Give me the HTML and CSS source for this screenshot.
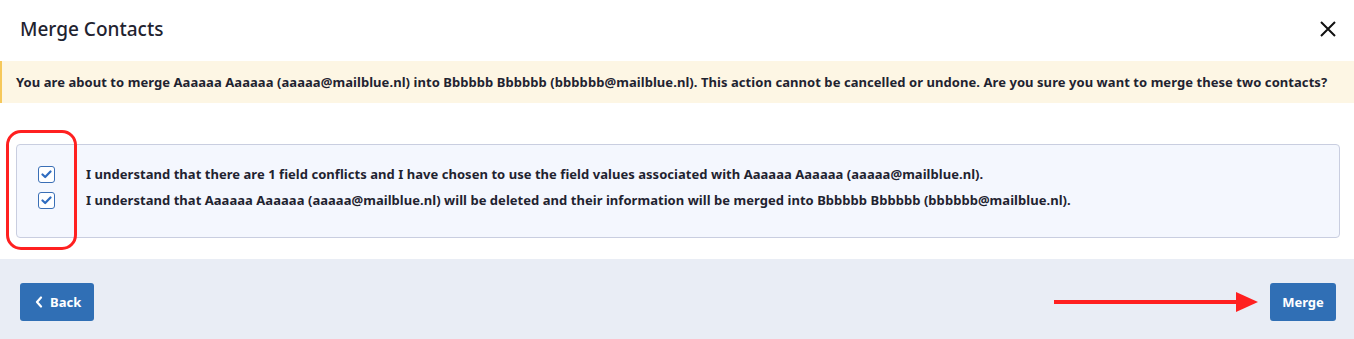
FILE: index.html
```html
<!DOCTYPE html>
<html>
<head>
<meta charset="utf-8">
<link rel="stylesheet" href="styles.css">
</head>
<body>
<div class="modal">
  <div class="header">
    <h1 class="title">Merge Contacts</h1>
    <button class="close" aria-label="Close">
      <svg width="16" height="16" viewBox="0 0 16 16"><path d="M1 1L15 15M15 1L1 15" stroke="#111" stroke-width="2" fill="none"/></svg>
    </button>
  </div>
  <div class="banner">You are about to merge Aaaaaa Aaaaaa (aaaaa@mailblue.nl) into Bbbbbb Bbbbbb (bbbbbb@mailblue.nl). This action cannot be cancelled or undone. Are you sure you want to merge these two contacts?</div>
  <div class="content">
    <div class="confirm-box">
      <label class="row">
        <span class="check"><svg width="11" height="9" viewBox="0 0 11 9"><path d="M1.5 4.5L4.2 7L9.5 1.5" stroke="#2f6cc0" stroke-width="2.2" fill="none" stroke-linecap="round" stroke-linejoin="round"/></svg></span>
        <span class="row-text">I understand that there are 1 field conflicts and I have chosen to use the field values associated with Aaaaaa Aaaaaa (aaaaa@mailblue.nl).</span>
      </label>
      <label class="row">
        <span class="check"><svg width="11" height="9" viewBox="0 0 11 9"><path d="M1.5 4.5L4.2 7L9.5 1.5" stroke="#2f6cc0" stroke-width="2.2" fill="none" stroke-linecap="round" stroke-linejoin="round"/></svg></span>
        <span class="row-text">I understand that Aaaaaa Aaaaaa (aaaaa@mailblue.nl) will be deleted and their information will be merged into Bbbbbb Bbbbbb (bbbbbb@mailblue.nl).</span>
      </label>
    </div>
    <div class="annot-ring"></div>
  </div>
  <div class="footer">
    <button class="btn back">
      <svg width="8" height="12" viewBox="0 0 8 12"><path d="M6 1.5L2 6L6 10.5" stroke="#fff" stroke-width="2.2" fill="none" stroke-linecap="round" stroke-linejoin="round"/></svg>
      Back
    </button>
    <div class="right">
      <svg class="annot-arrow" width="204" height="22" viewBox="0 0 204 22"><path d="M0 11H186" stroke="#ff2020" stroke-width="4"/><path d="M182 1L204 11L182 21Z" fill="#ff2020"/></svg>
      <button class="btn merge">Merge</button>
    </div>
  </div>
</div>
</body>
</html>
```
FILE: styles.css
```css
* { box-sizing: border-box; }
html, body { margin: 0; padding: 0; background: #fff; }
body {
  font-family: "Noto Sans", "Open Sans", "Liberation Sans", sans-serif;
  color: #1f2330;
  width: 1354px;
  height: 339px;
  overflow: hidden;
}
.modal { display: flex; flex-direction: column; height: 339px; }
.header {
  height: 61px;
  padding: 0 18px 4px 20px;
  display: flex;
  align-items: center;
  justify-content: space-between;
}
.title {
  margin: 0;
  font-size: 19px;
  font-weight: 500;
  color: #1f2330;
}
.close {
  border: 0;
  background: none;
  padding: 0;
  width: 16px;
  height: 16px;
  display: flex;
  cursor: pointer;
}
.banner {
  height: 42px;
  background: #fdf6e4;
  border-left: 2px solid #f6c85a;
  padding: 0 14px;
  display: flex;
  align-items: center;
  font-size: 13px;
  font-weight: 700;
  color: #1f2330;
  white-space: nowrap;
  letter-spacing: 0.06px;
}
.content {
  position: relative;
  padding: 41px 14px 21px 16px;
}
.confirm-box {
  background: #f4f7fe;
  border: 1px solid #c9cee0;
  border-radius: 4px;
  padding: 16px 20px 24px 21px;
  height: 94px;
}
.row {
  display: flex;
  align-items: center;
  height: 26px;
}
.check {
  width: 17px;
  height: 17px;
  border: 1px solid #3a6fb6;
  border-radius: 3px;
  background: #fff;
  display: flex;
  align-items: center;
  justify-content: center;
  margin-right: 31px;
  flex: none;
}
.row-text {
  font-size: 13px;
  font-weight: 700;
  color: #1f2330;
  white-space: nowrap;
  letter-spacing: 0.04px;
}
.annot-ring {
  position: absolute;
  left: 6px;
  top: 27px;
  width: 71px;
  height: 120px;
  border: 3px solid #ff2020;
  border-radius: 15px;
}
.footer {
  flex: 1;
  background: #e9edf5;
  padding: 24px 18px 0 20px;
  display: flex;
  align-items: flex-start;
  justify-content: space-between;
}
.right { display: flex; align-items: center; }
.annot-arrow { margin-right: 12px; }
.btn {
  height: 38px;
  border: 0;
  border-radius: 3px;
  background: #306fb5;
  color: #fff;
  font-family: inherit;
  font-size: 13px;
  font-weight: 700;
  display: flex;
  align-items: center;
  gap: 7px;
  cursor: pointer;
}
.back { width: 74px; padding: 0 0 0 15px; }
.merge { width: 66px; justify-content: center; padding: 0; }
```
